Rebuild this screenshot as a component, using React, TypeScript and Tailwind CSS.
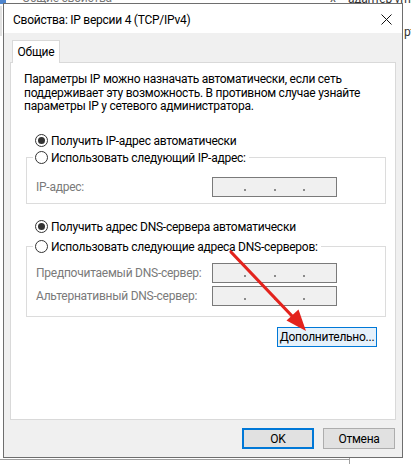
import React from "react";

function Radio({ checked }: { checked?: boolean }) {
  return (
    <span className="w-[13px] h-[13px] rounded-full border border-[#333333] bg-white flex items-center justify-center shrink-0">
      {checked && <span className="w-[7px] h-[7px] rounded-full bg-[#333333]" />}
    </span>
  );
}

function IpField() {
  return (
    <div className="w-[125px] h-[20px] border border-[#7a7a7a] bg-[#f0f0f0] flex items-end justify-between px-[31px] pb-[5px] shrink-0">
      <span className="w-[2px] h-[2px] bg-[#8a8a8a]" />
      <span className="w-[2px] h-[2px] bg-[#8a8a8a]" />
      <span className="w-[2px] h-[2px] bg-[#8a8a8a]" />
    </div>
  );
}

function FieldRow({ label }: { label: string }) {
  return (
    <div className="flex items-center ml-[3px]">
      <span className="w-[176px] text-[#7a7a7a] whitespace-nowrap">{label}</span>
      <IpField />
    </div>
  );
}

export default function App() {
  return (
    <div className="relative w-[411px] h-[464px] bg-white overflow-hidden font-['Roboto',sans-serif] text-[12px] tracking-[-0.25px] leading-[16px] text-black">
      {/* background window remnants */}
      <div className="absolute left-0 top-0 w-[6px] h-[4px] bg-[#4f86cf]" />
      <div className="absolute left-[22px] top-[-10px] text-[#777] whitespace-nowrap">Общие свойства</div>
      <div className="absolute left-[330px] top-[-10px] text-[#555] whitespace-nowrap">х</div>
      <div className="absolute left-[348px] top-[-9px] text-[#333] whitespace-nowrap">адаптер vmnet</div>
      <div className="absolute left-[404px] top-[24px] text-[#333] whitespace-nowrap">pt</div>
      <div className="absolute left-0 top-[6px] w-[2px] h-[30px] bg-[#e2e2e2]" />
      <div className="absolute left-0 top-[459px] w-[350px] h-[1px] bg-[#a0a0a0]" />
      <div className="absolute left-[349px] top-[458px] w-[1px] h-[6px] bg-[#a0a0a0]" />

      {/* dialog */}
      <div className="absolute left-[3px] top-[3px] w-[400px] h-[455px] border border-[#6e6e6e] bg-[#f0f0f0] flex flex-col">
        <div className="h-[29px] bg-white flex items-center justify-between shrink-0">
          <span className="pl-[9px] pt-[2px] whitespace-nowrap">Свойства: IP версии 4 (TCP/IPv4)</span>
          <span className="w-[32px] h-full flex items-center justify-center pt-[2px]">
            <svg width="11" height="11" viewBox="0 0 11 11">
              <path d="M0.5 0.5 L10.5 10.5 M10.5 0.5 L0.5 10.5" stroke="#111" strokeWidth="1" fill="none" />
            </svg>
          </span>
        </div>

        <div className="flex flex-col px-[6px] pt-[7px]">
          <div className="flex">
            <div className="relative z-10 ml-[2px] w-[48px] h-[23px] -mb-[1px] bg-white border border-b-0 border-[#d9d9d9] flex items-center justify-center">
              Общие
            </div>
          </div>
          <div className="w-[386px] h-[358px] bg-white border border-[#d9d9d9] px-[13px] pt-[10px] flex flex-col">
            <p className="leading-[13.5px] whitespace-nowrap">
              Параметры IP можно назначать автоматически, если сеть
              <br />
              поддерживает эту возможность. В противном случае узнайте
              <br />
              параметры IP у сетевого администратора.
            </p>

            <div className="mt-[19px] ml-[11px] h-[16px] flex items-center gap-[3px]">
              <Radio checked />
              <span className="whitespace-nowrap">Получить IP-адрес автоматически</span>
            </div>

            <fieldset className="mt-[1px] ml-[2px] w-[360px] border border-[#dcdcdc] pl-[6px] pr-[6px] pb-[6px]">
              <legend className="pl-[2px] pr-[3px] h-[16px]">
                <span className="flex items-center gap-[3px] h-[16px]">
                  <Radio />
                  <span className="whitespace-nowrap">Использовать следующий IP-адрес:</span>
                </span>
              </legend>
              <div className="mt-[11px]">
                <FieldRow label="IP-адрес:" />
              </div>
            </fieldset>

            <div className="mt-[15px] ml-[11px] h-[16px] flex items-center gap-[3px]">
              <Radio checked />
              <span className="whitespace-nowrap">Получить адрес DNS-сервера автоматически</span>
            </div>

            <fieldset className="mt-[4px] ml-[2px] w-[360px] border border-[#dcdcdc] pl-[6px] pr-[6px] pb-[10px]">
              <legend className="pl-[2px] pr-[3px] h-[16px]">
                <span className="flex items-center gap-[3px] h-[16px]">
                  <Radio />
                  <span className="whitespace-nowrap">Использовать следующие адреса DNS-серверов:</span>
                </span>
              </legend>
              <div className="mt-[8px] flex flex-col gap-[3px]">
                <FieldRow label="Предпочитаемый DNS-сервер:" />
                <FieldRow label="Альтернативный DNS-сервер:" />
              </div>
            </fieldset>

            <div className="mt-[10px] flex justify-end pr-[5px]">
              <div className="w-[100px] h-[20px] bg-[#e5f1fb] border border-[#0078d7] flex items-center justify-center whitespace-nowrap">
                Дополнительно...
              </div>
            </div>
          </div>

          <div className="mt-[8px] flex justify-end gap-[9px] pr-[1px]">
            <div className="w-[72px] h-[21px] bg-[#e1e1e1] border-2 border-[#0078d7] flex items-center justify-center">
              OK
            </div>
            <div className="w-[72px] h-[21px] bg-[#e1e1e1] border border-[#adadad] flex items-center justify-center">
              Отмена
            </div>
          </div>
        </div>
      </div>

      {/* red arrow annotation */}
      <svg className="absolute left-0 top-0 pointer-events-none" width="411" height="464" viewBox="0 0 411 464">
        <line x1="231" y1="252" x2="293" y2="317" stroke="#e3231d" strokeWidth="3.2" strokeLinecap="round" />
        <polygon points="306,331 286.5,320.5 298.5,309.5" fill="#e3231d" />
      </svg>
    </div>
  );
}
